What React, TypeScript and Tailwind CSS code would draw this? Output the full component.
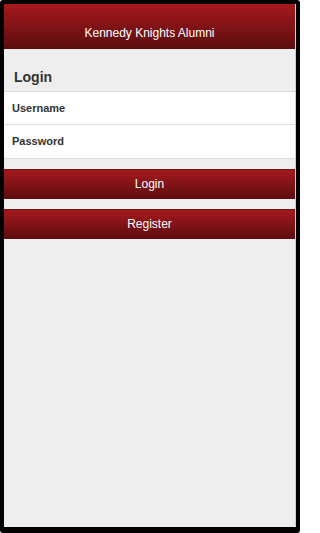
export default function App() {
  return (
    <div className="w-[300px] h-[533px] bg-black pt-[4px] pl-[4px] rounded-[3px]" style={{ fontFamily: '"Liberation Sans", Arial, sans-serif' }}>
      <div className="w-[292px] h-[523px] bg-[#eeeeee] flex flex-col border-r border-[#cfcfcf]">
        <div className="h-[45px] bg-gradient-to-b from-[#a6191d] to-[#5c0d0f] flex items-center justify-center pt-[12px]">
          <span className="text-white text-[12px]">Kennedy Knights Alumni</span>
        </div>

        <div className="h-[42px] pt-[20px] pl-[10px]">
          <h1 className="text-[14px] leading-[16px] font-bold text-[#333333]">Login</h1>
        </div>

        <div className="bg-white border-t border-b border-[#dddddd]">
          <div className="h-[33px] flex items-center pl-[8px] text-[11px] font-bold text-[#333333] border-b border-[#dddddd]">
            Username
          </div>
          <div className="h-[33px] flex items-center pl-[8px] text-[11px] font-bold text-[#333333]">
            Password
          </div>
        </div>

        <button className="mt-[10px] h-[30px] w-full bg-gradient-to-b from-[#a6191d] to-[#5c0d0f] border-t border-[#6b1a1c] text-white text-[12px] pb-[2px]">
          Login
        </button>
        <button className="mt-[10px] h-[30px] w-full bg-gradient-to-b from-[#a6191d] to-[#5c0d0f] border-t border-[#6b1a1c] text-white text-[12px] pb-[2px]">
          Register
        </button>
      </div>
    </div>
  );
}
